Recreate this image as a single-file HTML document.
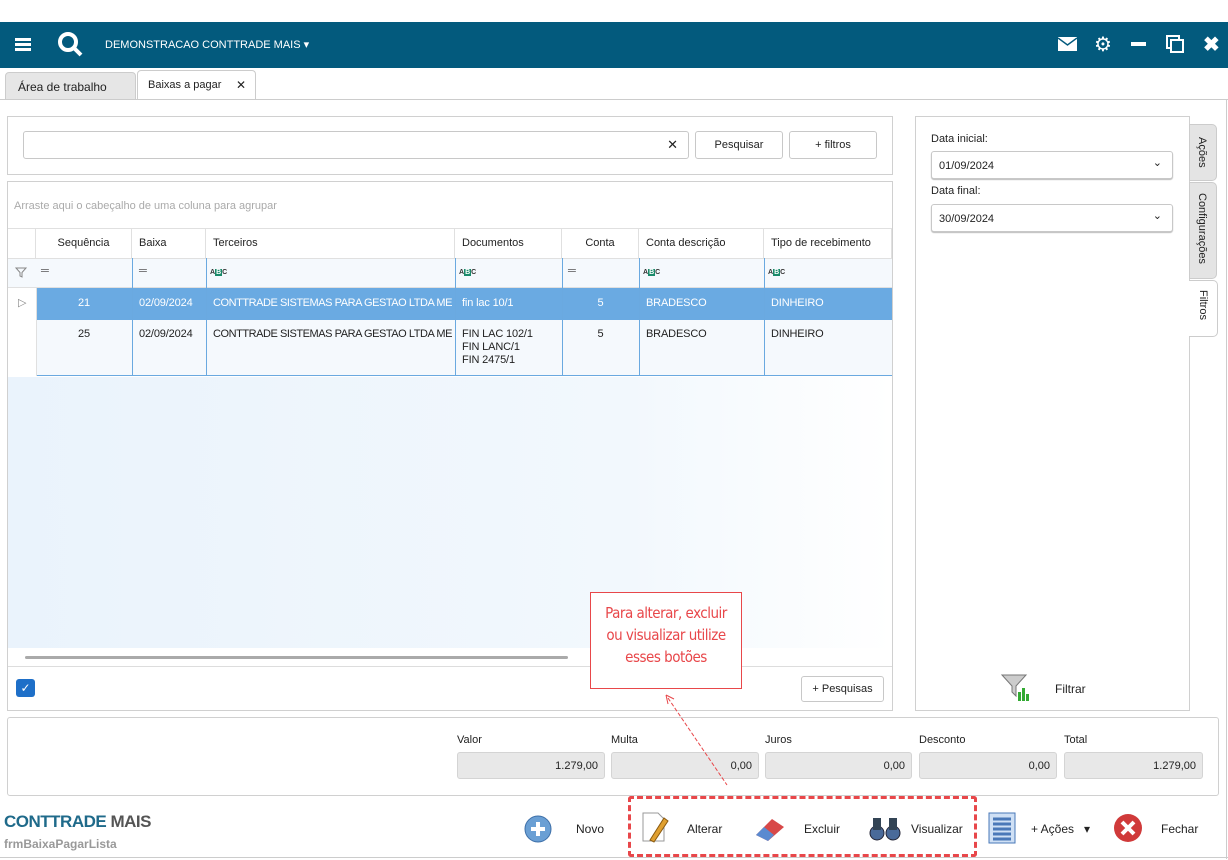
<!DOCTYPE html><html><head><meta charset="utf-8"><style>
*{box-sizing:border-box;margin:0;padding:0}
body{width:1228px;height:860px;background:#fff;font-family:"Liberation Sans",sans-serif;font-size:11px;color:#222;position:relative;overflow:hidden}
.a{position:absolute}
.top{left:0;top:22px;width:1228px;height:46px;background:#035a7d}
.box{border:1px solid #d0d0d0;background:#fff}
.inp{border:1px solid #c8c8c8;border-radius:3px;background:#fff}
.btn{border:1px solid #c8c8c8;border-radius:3px;background:#fff;text-align:center;font-size:11px}
.th{top:228px;height:30px;line-height:30px;border-right:1px solid #e0e0e0;font-size:11px;padding-left:7px}
.vl{width:1px;background:#6aa9e0}
.tot{border:1px solid #d4d4d4;border-radius:3px;background:#e8e8e8;text-align:right;padding-right:6px;line-height:26px;height:27px;top:752px}
.lbl{top:734px;font-size:11px}
.abc{font-size:7px;font-weight:bold;color:#333}
.abc b{background:#1a8a6a;color:#fff;padding:0 1px}
.vt{writing-mode:vertical-rl;font-size:11px}
.r{letter-spacing:-0.15px}
.t3{letter-spacing:-0.45px}
</style></head><body>
<div class="a top"></div>
<div class="a" style="left:15px;top:38px;width:16px;height:3px;background:#fff;box-shadow:0 5px 0 #fff,0 10px 0 #fff"></div>
<svg class="a" style="left:57px;top:31px" width="26" height="26"><circle cx="11" cy="11" r="8" fill="none" stroke="#fff" stroke-width="4"/><line x1="17" y1="17" x2="24" y2="24" stroke="#fff" stroke-width="4"/></svg>
<div class="a" style="left:105px;top:38px;color:#fff;font-size:11px">DEMONSTRACAO CONTTRADE MAIS ▾</div>
<svg class="a" style="left:1058px;top:37px" width="19" height="14"><rect width="19" height="14" fill="#fff"/><path d="M0 1 L9.5 8 L19 1" stroke="#035a7d" stroke-width="1.5" fill="none"/></svg>
<div class="a" style="left:1094px;top:32px;color:#fff;font-size:20px">⚙</div>
<div class="a" style="left:1131px;top:42px;width:15px;height:4px;background:#fff"></div>
<div class="a" style="left:1166px;top:35px;width:14px;height:14px;border:2px solid #fff"></div>
<div class="a" style="left:1170px;top:39px;width:14px;height:14px;border:2px solid #fff;background:#035a7d"></div>
<div class="a" style="left:1203px;top:32px;color:#fff;font-size:20px;font-weight:bold">✖</div>
<div class="a" style="left:5px;top:72px;width:131px;height:28px;background:#e6e6e6;border:1px solid #ccc;border-radius:4px 4px 0 0;padding:7px 12px;font-size:12px">Área de trabalho</div>
<div class="a" style="left:137px;top:70px;width:119px;height:30px;background:#fff;border:1px solid #ccc;border-bottom:none;border-radius:4px 4px 0 0;padding:8px 10px;font-size:11px">Baixas a pagar<span style="position:absolute;left:98px;top:7px;font-size:12px">✕</span></div>
<div class="a" style="left:0;top:99px;width:1228px;height:1px;background:#ccc"></div>
<div class="a" style="left:1226px;top:99px;width:1px;height:760px;background:#ccc"></div>
<!-- search -->
<div class="a box" style="left:7px;top:116px;width:886px;height:59px"></div>
<div class="a inp" style="left:23px;top:131px;width:666px;height:28px"><span style="position:absolute;right:10px;top:5px;font-size:13px">✕</span></div>
<div class="a btn" style="left:695px;top:131px;width:88px;height:28px;line-height:26px">Pesquisar</div>
<div class="a btn" style="left:789px;top:131px;width:88px;height:28px;line-height:26px">+ filtros</div>
<!-- grid -->
<div class="a box" style="left:7px;top:181px;width:886px;height:530px"></div>
<div class="a" style="left:14px;top:200px;font-size:11px;color:#aaa">Arraste aqui o cabeçalho de uma coluna para agrupar</div>
<div class="a" style="left:8px;top:228px;width:884px;height:1px;background:#e0e0e0"></div>
<div class="a th" style="left:8px;width:28px"></div>
<div class="a th" style="left:36px;width:96px;text-align:center;padding:0">Sequência</div>
<div class="a th" style="left:132px;width:74px">Baixa</div>
<div class="a th" style="left:206px;width:249px">Terceiros</div>
<div class="a th" style="left:455px;width:107px">Documentos</div>
<div class="a th" style="left:562px;width:77px;text-align:center;padding:0">Conta</div>
<div class="a th" style="left:639px;width:125px">Conta descrição</div>
<div class="a th" style="left:764px;width:128px">Tipo de recebimento</div>
<div class="a" style="left:8px;top:258px;width:884px;height:30px;background:#f5f9fd;border-top:1px solid #e0e0e0;border-bottom:1px solid #e0e0e0"></div>
<svg class="a" style="left:15px;top:267px" width="12" height="11"><path d="M1 1H11L7 5.5V10L5 9V5.5Z" fill="none" stroke="#888"/></svg>
<div class="a" style="left:41px;top:265px;color:#555">═</div>
<div class="a" style="left:139px;top:265px;color:#555">═</div>
<div class="a" style="left:568px;top:265px;color:#555">═</div>
<div class="a abc" style="left:210px;top:269px">A<b>B</b>C</div>
<div class="a abc" style="left:459px;top:269px">A<b>B</b>C</div>
<div class="a abc" style="left:643px;top:269px">A<b>B</b>C</div>
<div class="a abc" style="left:768px;top:269px">A<b>B</b>C</div>
<div class="a" style="left:36px;top:288px;width:856px;height:32px;background:#6aaae2"></div>
<div class="a" style="left:36px;top:320px;width:856px;height:56px;background:#f5f9fd;border-bottom:1px solid #6aa9e0"></div>
<div class="a" style="left:18px;top:296px;color:#888;font-size:11px">▷</div>
<div class="a vl" style="left:132px;top:258px;height:118px"></div>
<div class="a vl" style="left:206px;top:258px;height:118px"></div>
<div class="a vl" style="left:455px;top:258px;height:118px"></div>
<div class="a vl" style="left:562px;top:258px;height:118px"></div>
<div class="a vl" style="left:639px;top:258px;height:118px"></div>
<div class="a vl" style="left:764px;top:258px;height:118px"></div>
<div class="a" style="left:36px;top:288px;width:1px;height:88px;background:#e0e0e0"></div>
<div class="r" style="color:#fff">
<div class="a" style="left:36px;top:297px;width:96px;text-align:center">21</div>
<div class="a" style="left:139px;top:297px">02/09/2024</div>
<div class="a t3" style="left:213px;top:297px">CONTTRADE SISTEMAS PARA GESTAO LTDA ME</div>
<div class="a" style="left:462px;top:297px">fin lac 10/1</div>
<div class="a" style="left:562px;top:297px;width:77px;text-align:center">5</div>
<div class="a" style="left:646px;top:297px">BRADESCO</div>
<div class="a" style="left:771px;top:297px">DINHEIRO</div></div>
<div class="r">
<div class="a" style="left:36px;top:328px;width:96px;text-align:center">25</div>
<div class="a" style="left:139px;top:328px">02/09/2024</div>
<div class="a t3" style="left:213px;top:328px">CONTTRADE SISTEMAS PARA GESTAO LTDA ME</div>
<div class="a" style="left:462px;top:328px;line-height:13px">FIN LAC 102/1<br>FIN LANC/1<br>FIN 2475/1</div>
<div class="a" style="left:562px;top:328px;width:77px;text-align:center">5</div>
<div class="a" style="left:646px;top:328px">BRADESCO</div>
<div class="a" style="left:771px;top:328px">DINHEIRO</div></div>
<div class="a" style="left:8px;top:377px;width:884px;height:271px;background:linear-gradient(90deg,#eaf3fc 0%,#f2f8fd 70%,#fff 100%)"></div>
<div class="a" style="left:25px;top:656px;width:543px;height:3px;background:#aaa;border-radius:2px"></div>
<div class="a" style="left:8px;top:666px;width:884px;height:1px;background:#ddd"></div>
<div class="a" style="left:16px;top:679px;width:19px;height:18px;background:#1e6fc8;border-radius:3px;color:#fff;text-align:center;line-height:18px;font-size:12px">✓</div>
<div class="a btn" style="left:801px;top:676px;width:83px;height:26px;line-height:24px">+ Pesquisas</div>
<!-- right panel -->
<div class="a box" style="left:915px;top:116px;width:275px;height:595px"></div>
<div class="a" style="left:931px;top:133px;font-size:11px">Data inicial:</div>
<div class="a inp" style="left:931px;top:151px;width:242px;height:28px;padding:8px 7px;box-shadow:0 1px 1px #bbb">01/09/2024<span style="position:absolute;right:10px;top:4px">⌄</span></div>
<div class="a" style="left:931px;top:185px;font-size:11px">Data final:</div>
<div class="a inp" style="left:931px;top:204px;width:242px;height:28px;padding:8px 7px;box-shadow:0 1px 1px #bbb">30/09/2024<span style="position:absolute;right:10px;top:4px">⌄</span></div>
<div class="a" style="left:1189px;top:124px;width:28px;height:57px;background:#e4e4e4;border:1px solid #ccc;border-radius:0 5px 5px 0"></div>
<div class="a vt" style="left:1196px;top:137px">Ações</div>
<div class="a" style="left:1189px;top:182px;width:28px;height:97px;background:#e4e4e4;border:1px solid #ccc;border-radius:0 5px 5px 0"></div>
<div class="a vt" style="left:1196px;top:193px">Configurações</div>
<div class="a" style="left:1189px;top:280px;width:29px;height:57px;background:#fff;border:1px solid #ccc;border-left:none;border-radius:0 5px 5px 0"></div>
<div class="a vt" style="left:1197px;top:290px">Filtros</div>
<svg class="a" style="left:1000px;top:672px" width="32" height="30"><path d="M2 3 H26 L16 14 V24 L12 20 V14Z" fill="#ccc" stroke="#777"/><rect x="18" y="20" width="3" height="9" fill="#3a3"/><rect x="22" y="16" width="3" height="13" fill="#3a3"/><rect x="26" y="22" width="3" height="7" fill="#3a3"/></svg>
<div class="a" style="left:1055px;top:682px;font-size:12px">Filtrar</div>
<!-- totals -->
<div class="a box" style="left:7px;top:717px;width:1212px;height:79px;border-radius:3px"></div>
<div class="a lbl" style="left:457px">Valor</div><div class="a lbl" style="left:611px">Multa</div><div class="a lbl" style="left:765px">Juros</div><div class="a lbl" style="left:919px">Desconto</div><div class="a lbl" style="left:1064px">Total</div>
<div class="a tot" style="left:457px;width:148px">1.279,00</div>
<div class="a tot" style="left:611px;width:148px">0,00</div>
<div class="a tot" style="left:765px;width:147px">0,00</div>
<div class="a tot" style="left:919px;width:138px">0,00</div>
<div class="a tot" style="left:1064px;width:139px">1.279,00</div>
<!-- annotation -->
<div class="a" style="left:590px;top:592px;width:152px;height:97px;border:1.5px solid #e8474a;background:#fff;color:#e8474a;font-size:15px;text-align:center;line-height:22px;padding-top:9px;font-family:'DejaVu Sans Condensed','Liberation Sans Narrow',sans-serif;letter-spacing:-0.5px">Para alterar, excluir<br>ou visualizar utilize<br>esses botões</div>
<svg class="a" style="left:660px;top:690px" width="80" height="100"><line x1="8" y1="8" x2="67" y2="95" stroke="#e8474a" stroke-width="1" stroke-dasharray="4 2"/><path d="M6 5 L8 14 M6 5 L14 9" stroke="#e8474a" fill="none"/></svg>
<!-- footer -->
<div class="a" style="left:4px;top:812px;font-size:17px;font-weight:bold;color:#1f6a8a;letter-spacing:-0.5px">CONTTRADE <span style="color:#555">MAIS</span></div>
<div class="a" style="left:4px;top:837px;font-size:12px;font-weight:bold;color:#999">frmBaixaPagarLista</div>
<div class="a" style="left:628px;top:796px;width:349px;height:61px;border:3px dashed #e8474a;border-radius:3px"></div>
<svg class="a" style="left:523px;top:814px" width="30" height="30"><circle cx="15" cy="15" r="13" fill="#6a9fd4" stroke="#3d6fa8"/><path d="M15 8 V22 M8 15 H22" stroke="#fff" stroke-width="4"/></svg>
<div class="a" style="left:576px;top:822px;font-size:12px">Novo</div>
<svg class="a" style="left:640px;top:810px" width="30" height="34"><path d="M3 3 H18 L24 9 V31 H3Z" fill="#fff" stroke="#999"/><path d="M10 30 L24 8 L28 11 L14 32Z" fill="#e0a030" stroke="#8a5a10"/></svg>
<div class="a" style="left:687px;top:822px;font-size:12px">Alterar</div>
<svg class="a" style="left:752px;top:813px" width="36" height="30"><path d="M4 22 L20 6 L32 14 L16 28Z" fill="#d84848"/><path d="M4 22 L12 14 L22 22 L16 28Z" fill="#5a8ad0"/></svg>
<div class="a" style="left:804px;top:822px;font-size:12px">Excluir</div>
<svg class="a" style="left:868px;top:814px" width="34" height="28"><circle cx="9" cy="19" r="7" fill="#4a6a9a" stroke="#223"/><circle cx="25" cy="19" r="7" fill="#4a6a9a" stroke="#223"/><rect x="5" y="4" width="8" height="12" fill="#345"/><rect x="21" y="4" width="8" height="12" fill="#345"/></svg>
<div class="a" style="left:911px;top:822px;font-size:12px">Visualizar</div>
<svg class="a" style="left:988px;top:812px" width="28" height="32"><rect x="1" y="1" width="26" height="30" fill="#cfe0f5" stroke="#4a78b8"/><path d="M5 7H23M5 12H23M5 17H23M5 22H23M5 27H23" stroke="#4a78b8" stroke-width="3"/></svg>
<div class="a" style="left:1031px;top:822px;font-size:12px">+ Ações &nbsp;&nbsp;▾</div>
<svg class="a" style="left:1113px;top:813px" width="30" height="30"><circle cx="15" cy="15" r="14" fill="#d03a3a"/><path d="M9 9 L21 21 M21 9 L9 21" stroke="#fff" stroke-width="4"/></svg>
<div class="a" style="left:1161px;top:822px;font-size:12px">Fechar</div>
<div class="a" style="left:0;top:857px;width:1228px;height:1px;background:#ccc"></div>
</body></html>
